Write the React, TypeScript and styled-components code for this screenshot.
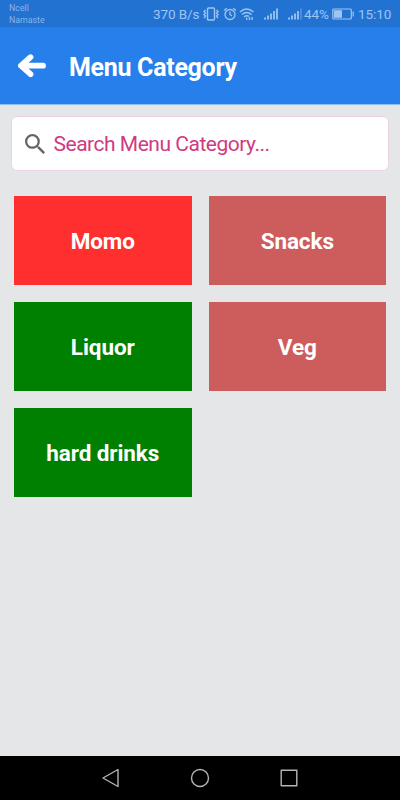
import React from "react";
import styled, { createGlobalStyle } from "styled-components";

const GlobalStyle = createGlobalStyle`
  * { box-sizing: border-box; }
  body { margin: 0; background: #e5e6e8; font-family: Roboto, sans-serif; }
`;

const Screen = styled.div`
  display: flex;
  flex-direction: column;
  width: 400px;
  height: 800px;
  overflow: hidden;
  background: #e5e6e8;
`;

const StatusBar = styled.div`
  display: flex;
  align-items: center;
  height: 27px;
  padding: 0 8px 0 9px;
  background: #2272d2;
  color: #9dc5f2;
`;

const Carrier = styled.div`
  flex: 1;
  padding-top: 1px;
  font-size: 8.8px;
  line-height: 12px;
  color: #86b5ec;
`;

const StatusText = styled.span<{ $width: number; $gap?: number }>`
  flex: none;
  width: ${({ $width }) => $width}px;
  margin-right: ${({ $gap = 0 }) => $gap}px;
  padding-top: 1px;
  font-size: 13.5px;
  line-height: 16px;
  letter-spacing: -0.1px;
  white-space: nowrap;
`;

const StatusIcon = styled.svg<{ $gap: number; $stroke?: number }>`
  flex: none;
  display: block;
  margin-right: ${({ $gap }) => $gap}px;
  fill: none;
  stroke: currentColor;
  stroke-width: ${({ $stroke = 1.2 }) => $stroke};
`;

const Header = styled.header`
  display: flex;
  align-items: center;
  height: 78px;
  padding: 0 0 0 17px;
  background: #267fea;
  border-bottom: 1px solid #8fbcf2;
  color: #fff;
`;

const BackButton = styled.button`
  display: flex;
  width: 52px;
  padding: 0;
  border: 0;
  background: none;
  color: inherit;
`;

const Title = styled.h1`
  margin: 4px 0 0;
  font-size: 25px;
  letter-spacing: -0.3px;
  line-height: 30px;
  font-weight: 700;
`;

const Content = styled.main`
  flex: 1;
  padding: 11px 11px 0;
`;

const SearchBox = styled.label`
  display: flex;
  align-items: center;
  height: 55px;
  padding-left: 13px;
  background: #fff;
  border: 1px solid #edd3e2;
  border-radius: 6px;
`;

const SearchInput = styled.input`
  width: 300px;
  margin-left: 8.5px;
  padding: 1px 0 0;
  border: 0;
  outline: 0;
  background: none;
  font: 400 21px/26px Roboto, sans-serif;
  letter-spacing: -0.48px;
  color: #d03a80;
  &::placeholder { color: #d03a80; opacity: 1; }
`;

const CategoryGrid = styled.div`
  display: grid;
  grid-template-columns: 1fr 1fr;
  grid-auto-rows: 89px;
  gap: 17px;
  padding: 25px 3px 0;
`;

const Category = styled.button<{ $color: string }>`
  padding: 0;
  border: 0;
  background: ${({ $color }) => $color};
  color: #fff;
  font: 700 22.5px/26px Roboto, sans-serif;
  letter-spacing: -0.1px;
`;

const NavBar = styled.nav`
  display: flex;
  justify-content: center;
  align-items: center;
  gap: 70px;
  height: 44px;
  background: #000;
`;

const NavIcon = styled.svg`
  display: block;
  fill: none;
  stroke: #b4b4b4;
  stroke-width: 1.4;
  stroke-linejoin: round;
`;

const categories = [
  { name: "Momo", color: "#ff2f2f" },
  { name: "Snacks", color: "#cd5c5c" },
  { name: "Liquor", color: "#008000" },
  { name: "Veg", color: "#cd5c5c" },
  { name: "hard drinks", color: "#008000" },
];

function Signal({ gap, weak }: { gap: number; weak?: boolean }) {
  return (
    <StatusIcon $gap={gap} $stroke={1.8} width="14" height="14" viewBox="0 0 14 14">
      <path d="M1 12.5V10.5M4 12.5V8.5M7 12.5V6.5" />
      <path d="M10 12.5V4" />
      <path d="M13 12.5V1.5" opacity={weak ? 0.35 : 1} />
    </StatusIcon>
  );
}

export default function App() {
  return (
    <>
      <GlobalStyle />
      <Screen>
        <StatusBar>
          <Carrier>
            Ncell
            <br />
            Namaste
          </Carrier>
          <StatusText $width={46} $gap={4}>370 B/s</StatusText>
          <StatusIcon $gap={4} $stroke={1.4} width="16" height="14" viewBox="0 0 16 14">
            <rect x="4.5" y="1" width="7" height="12" rx="1" />
            <path d="M2.5 3 1 4.5 2.5 6 1 7.5 2.5 9 1 11M13.5 3 15 4.5 13.5 6 15 7.5 13.5 9 15 11" />
          </StatusIcon>
          <StatusIcon $gap={2} $stroke={1.3} width="14" height="14" viewBox="0 0 14 14">
            <circle cx="7" cy="7.5" r="5" />
            <path d="M7 4.5V7.5L9 9M1 3.6 3.8 1.2M13 3.6 10.2 1.2" />
          </StatusIcon>
          <StatusIcon $gap={9} $stroke={1.4} width="16" height="14" viewBox="0 0 16 14">
            <path d="M1 5Q7.5-.8 14.5 5M3 7.6Q7.7 3.4 12.5 7.6M5 10Q7.7 7.7 10 9.5" />
            <path d="M7.7 10.8V13M10.5 10V13M13.2 10V13" />
          </StatusIcon>
          <Signal gap={10} />
          <Signal gap={2} weak />
          <StatusText $width={24} $gap={4}>44%</StatusText>
          <StatusIcon $gap={4} width="22" height="12" viewBox="0 0 22 12">
            <rect x=".8" y="1" width="18.5" height="10" rx="1" />
            <rect x="2" y="2.2" width="8" height="7.6" fill="currentColor" stroke="none" />
            <path d="M21.2 3.5V8.5" />
          </StatusIcon>
          <StatusText $width={34}>15:10</StatusText>
        </StatusBar>
        <Header>
          <BackButton aria-label="Back">
            <svg width="30" height="24" viewBox="0 0 30 24" fill="none" stroke="currentColor" strokeWidth="5.8" strokeLinecap="round" strokeLinejoin="round">
              <path d="M13.5 3.2 4 11.7 13.5 20.2M5 11.7H26" />
            </svg>
          </BackButton>
          <Title>Menu Category</Title>
        </Header>
        <Content>
          <SearchBox>
            <svg width="20" height="20" viewBox="3 3 17.5 17.5" fill="#626465">
              <path d="M15.5 14h-.79l-.28-.27A6.471 6.471 0 0 0 16 9.5 6.5 6.5 0 1 0 9.5 16c1.61 0 3.09-.59 4.23-1.57l.27.28v.79l5 4.99L20.49 19l-4.99-5zm-6 0C7.01 14 5 11.99 5 9.5S7.01 5 9.5 5 14 7.01 14 9.5 11.99 14 9.5 14z" />
            </svg>
            <SearchInput placeholder="Search Menu Category..." />
          </SearchBox>
          <CategoryGrid>
            {categories.map(({ name, color }) => (
              <Category key={name} $color={color}>{name}</Category>
            ))}
          </CategoryGrid>
        </Content>
        <NavBar>
          <NavIcon width="18" height="20" viewBox="0 0 18 20">
            <path d="M16 1.5V18.5L1 10Z" />
          </NavIcon>
          <NavIcon width="20" height="20" viewBox="0 0 20 20">
            <circle cx="10" cy="10" r="8.5" />
          </NavIcon>
          <NavIcon width="18" height="18" viewBox="0 0 18 18">
            <rect x="1.2" y="1.2" width="15.6" height="15.6" />
          </NavIcon>
        </NavBar>
      </Screen>
    </>
  );
}
